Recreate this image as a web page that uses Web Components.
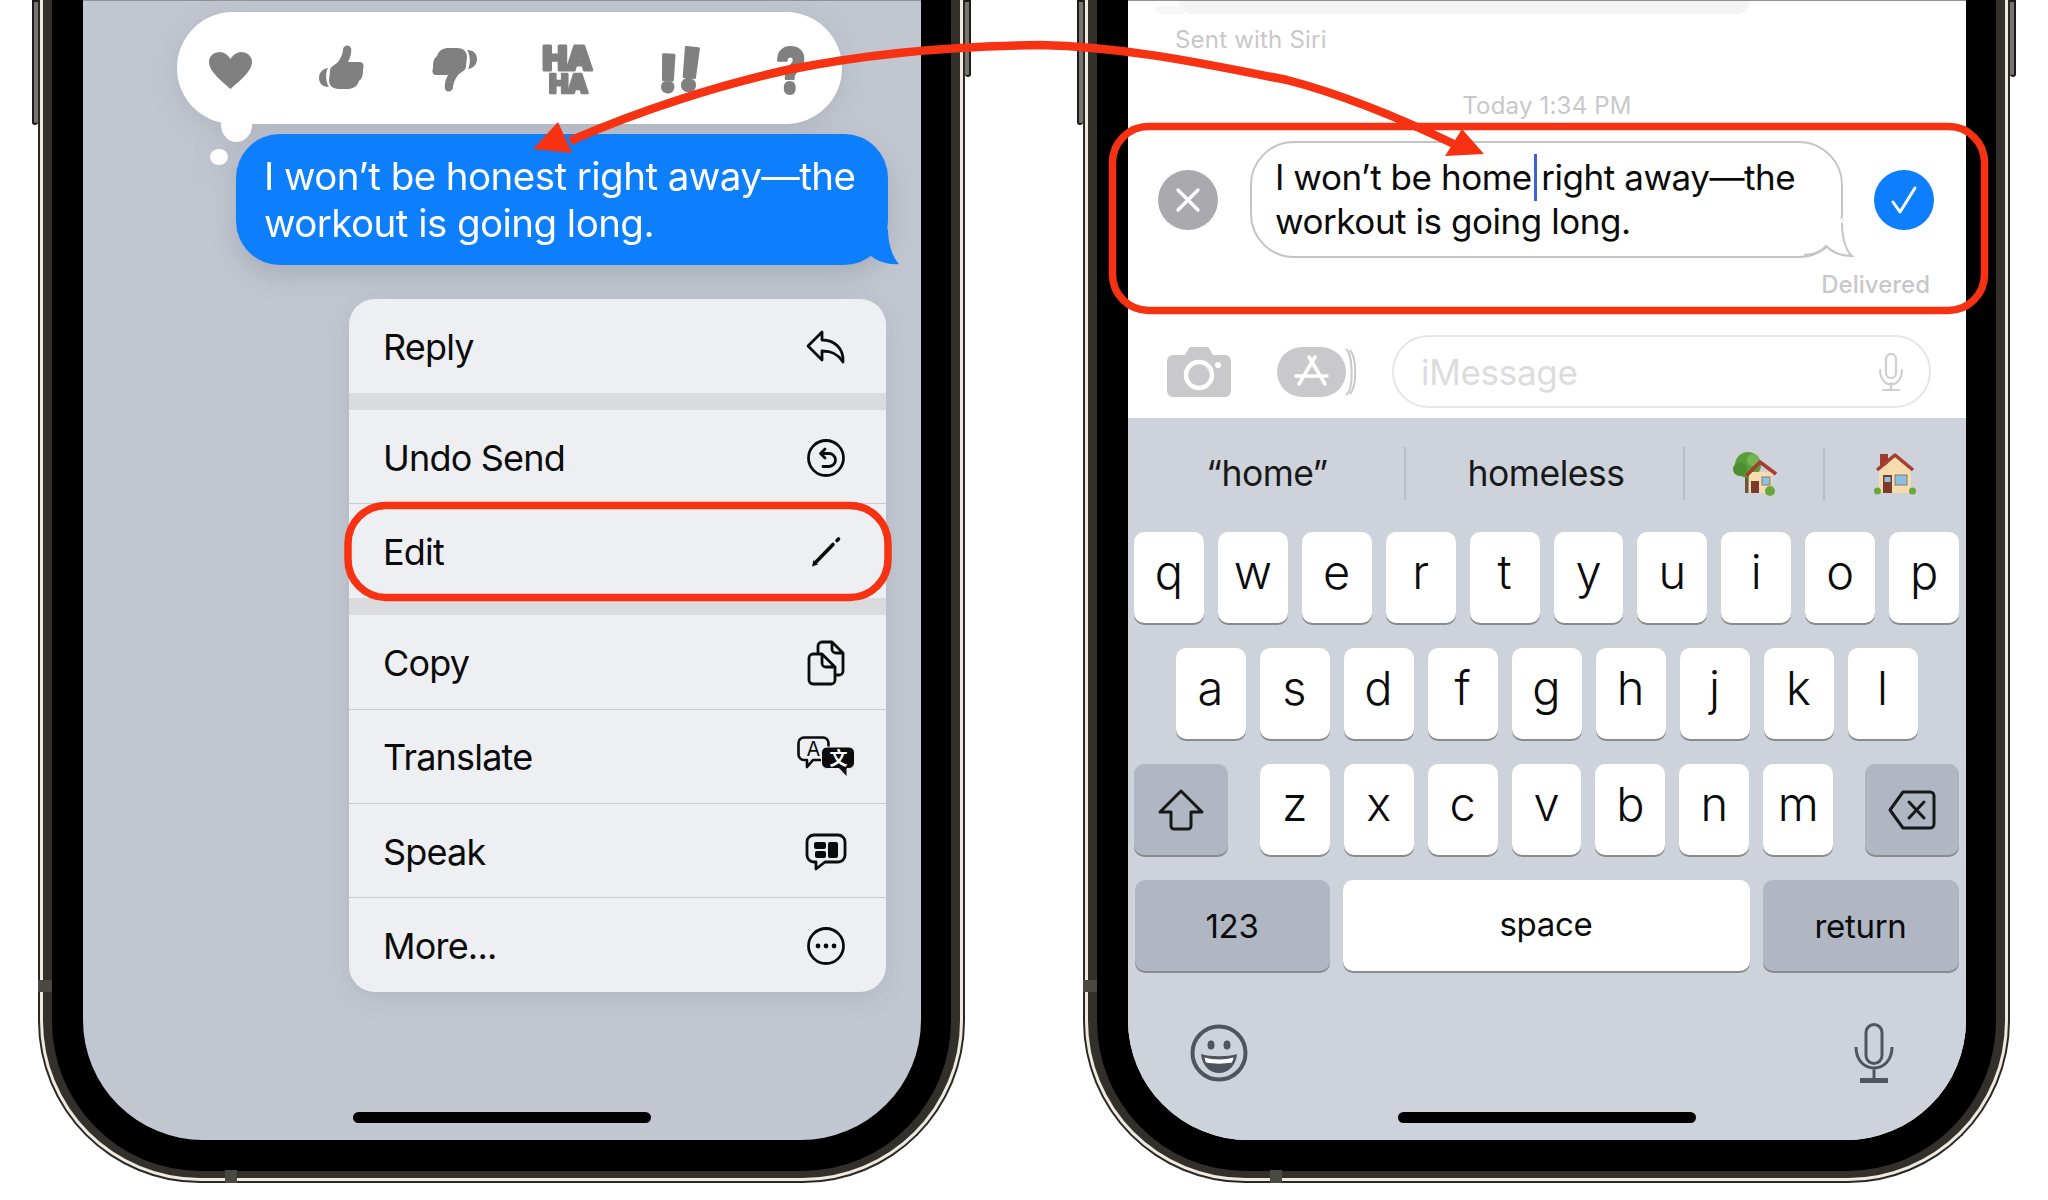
<!DOCTYPE html>
<html>
<head>
<meta charset="utf-8">
<style>
html, body { margin: 0; background: #fff; }
body { width: 2048px; height: 1200px; overflow: hidden; font-family: Inter, "Noto Sans", sans-serif; }
.stage { position: relative; display: flex; gap: 118px; padding-left: 38px; height: 1200px; }
svg { display: block; }
</style>
</head>
<body>
<div class="stage">
	<phone-frame bg="#c1c6d0">
		<tap-back></tap-back>
		<msg-bubble>I won’t be honest right away—the workout is going long.</msg-bubble>
		<action-menu>
			<menu-row label="Reply" gap><svg width="40" height="34" viewBox="0 0 40 34" fill="none" stroke="#0b0b0c" stroke-width="2.8" stroke-linejoin="round"><path d="M2 16 16 2V10C28 10 38 18 37 32 32 24 26 21 16 21V30Z"/></svg></menu-row>
			<menu-row label="Undo Send" line><svg width="40" height="40" viewBox="0 0 40 40" fill="none" stroke="#0b0b0c" stroke-width="2.8" stroke-linecap="round" stroke-linejoin="round"><circle cx="20" cy="20" r="17.5"/><path d="M15 15.5H23A6.5 6.5 0 0 1 23 28.5H17M19 11 14.5 15.5 19 20"/></svg></menu-row>
			<menu-row label="Edit" gap><svg width="32" height="32" viewBox="0 0 32 32" fill="none" stroke="#0b0b0c" stroke-width="3.6" stroke-linecap="round"><path d="M6 26 23 8.5M27 4.5 28.5 3"/><path d="M2 30.5 3.5 24 8 28.5Z" fill="#0b0b0c" stroke="none"/></svg></menu-row>
			<menu-row label="Copy" line><svg width="38" height="46" viewBox="0 0 38 46" fill="none" stroke="#0b0b0c" stroke-width="2.8" stroke-linejoin="round"><path d="M11 14V6A4 4 0 0 1 15 2H25L36 13V31A4 4 0 0 1 32 35H28M25 2V9A4 4 0 0 0 29 13H36"/><path d="M6 14H15L28 27V40A4 4 0 0 1 24 44H6A4 4 0 0 1 2 40V18A4 4 0 0 1 6 14ZM15 14V23A4 4 0 0 0 19 27H28"/></svg></menu-row>
			<menu-row label="Translate" line><svg width="58" height="42" viewBox="0 0 58 42" fill="none"><path d="M7 1.5H26A5.5 5.5 0 0 1 31.5 7V24H16L10 31V24H7A5.5 5.5 0 0 1 1.5 18.5V7A5.5 5.5 0 0 1 7 1.5Z" stroke="#0b0b0c" stroke-width="2.6" stroke-linejoin="round"/><text x="16" y="20" text-anchor="middle" font-family="Inter, sans-serif" font-size="20" fill="#0b0b0c">A</text><path d="M30 11H52A5.5 5.5 0 0 1 57.5 16.5V27A5.5 5.5 0 0 1 52 32.5H50V41L42 32.5H30A5.5 5.5 0 0 1 24.5 27V16.5A5.5 5.5 0 0 1 30 11Z" fill="#0b0b0c" stroke="#eeeff2" stroke-width="1"/><text x="41" y="28.5" text-anchor="middle" font-family="'Noto Sans CJK SC', sans-serif" font-weight="700" font-size="18" fill="#fff">文</text></svg></menu-row>
			<menu-row label="Speak" line><svg width="42" height="38" viewBox="0 0 42 38" fill="none"><path d="M9 2H33A7 7 0 0 1 40 9V22A7 7 0 0 1 33 29H20L11 36V29H9A7 7 0 0 1 2 22V9A7 7 0 0 1 9 2Z" stroke="#0b0b0c" stroke-width="2.8" stroke-linejoin="round"/><rect x="9" y="9" width="12" height="7" rx="2" fill="#0b0b0c"/><rect x="10" y="18" width="11" height="7" rx="2" fill="#0b0b0c"/><rect x="23" y="9" width="10" height="16" rx="2" fill="#0b0b0c"/></svg></menu-row>
			<menu-row label="More..."><svg width="40" height="40" viewBox="0 0 40 40" fill="none"><circle cx="20" cy="20" r="17.5" stroke="#0b0b0c" stroke-width="2.8"/><circle cx="12" cy="20" r="2.4" fill="#0b0b0c"/><circle cx="20" cy="20" r="2.4" fill="#0b0b0c"/><circle cx="28" cy="20" r="2.4" fill="#0b0b0c"/></svg></menu-row>
		</action-menu>
	</phone-frame>
	<phone-frame bg="#fff">
		<thread-head></thread-head>
		<edit-row>I won’t be home right away—the workout is going long.</edit-row>
		<input-bar></input-bar>
		<ios-keyboard></ios-keyboard>
	</phone-frame>
	<call-outs></call-outs>
</div>

<script>
class PhoneFrame extends HTMLElement {
	constructor() {
		super();
		this.attachShadow({ mode: "open" });
		this.shadowRoot.innerHTML = `
			<style>
				:host { display: block; position: relative; width: 927px; height: 1183px; flex: none; }
				.rim { box-sizing: border-box; height: 100%; border: 2px solid #2b2926; border-top: 0; border-radius: 0 0 162px 162px; background: #efe9df; padding: 0 3px 3px; }
				.band { box-sizing: border-box; height: 100%; border: solid #33302c; border-width: 0 9px 7px; border-radius: 0 0 157px 157px; background: #000; padding: 0 30px 31px 31px; }
				.screen { display: flex; flex-direction: column; height: 100%; overflow: hidden; border-radius: 0 0 120px 120px; position: relative; border-top: 1px solid #8f9299; box-sizing: border-box; }
				.home { flex: none; width: 298px; height: 11px; border-radius: 6px; background: #000; margin: auto auto 17px; }
				.btn { position: absolute; top: 0; width: 6px; box-sizing: border-box; background: #77756f; border: 2px solid #1c1b18; border-radius: 0 0 3px 3px; }
				.btn.l { left: -6px; height: 125px; border-right: 0; }
				.btn.r { right: -6px; height: 77px; border-left: 0; }
				.tick { position: absolute; background: #4a4843; }
				.tick.side { left: 0; top: 980px; width: 14px; height: 12px; }
				.tick.bottom { left: 187px; bottom: 0; width: 12px; height: 13px; }
				::slotted(ios-keyboard) { flex: 1; }
			</style>
			<div class="btn l"></div><div class="btn r"></div>
			<div class="rim"><div class="band"><div class="screen">
				<slot></slot>
				<div class="home" id="home"></div>
			</div></div></div>
			<div class="tick side"></div><div class="tick bottom"></div>
		`;
	}
	connectedCallback() {
		const bg = this.getAttribute("bg");
		this.shadowRoot.querySelector(".screen").style.background = bg;
		const home = this.shadowRoot.getElementById("home");
		// on the keyboard screen the bar sits on top of the keyboard
		if (this.querySelector("ios-keyboard")) {
			home.style.cssText = "position:absolute;left:270px;bottom:17px;margin:0";
		}
	}
}
customElements.define("phone-frame", PhoneFrame);

class TapBack extends HTMLElement {
	constructor() {
		super();
		this.attachShadow({ mode: "open" });
		const thumb = `<path d="M9 23C3 24 0 28 0 33 0 38 3 42 10 42 7 38 6 28 9 23Z"/><path d="M11 26C11 22 14 21 18 18 21 15 24 9 24 4 25 0 30-1 32 3 33 8 31 13 29 17H41C45 17 45 22 44 24 44 28 44 33 40 36 38 41 36 43 30 44H20C13 44 10 40 10 35Z"/>`;
		this.shadowRoot.innerHTML = `
			<style>
				:host { display: block; position: relative; box-sizing: border-box; width: 665px; height: 112px; margin: 11px 0 0 94px; background: #fff; border-radius: 56px; filter: drop-shadow(0 6px 14px rgba(60,65,80,.12)); }
				.row { height: 100%; position: relative; }
				.row > * { position: absolute; }
				.puff { position: absolute; background: #fff; border-radius: 50%; }
				text { font-family: Inter, sans-serif; font-weight: 900; fill: #808080; stroke: #808080; stroke-linejoin: round; }
			</style>
			<div class="row">
				<svg style="left:32px;top:40px" width="43" height="37" viewBox="0 0 43 37" fill="#808080"><path d="M21.5 37C14 30 0 20 0 10 0 4 5 0 11 0 15 0 19 3 21.5 7 24 3 28 0 32 0 38 0 43 4 43 10 43 20 29 30 21.5 37Z"/></svg>
				<svg style="left:142px;top:33px" width="45" height="44" viewBox="0 0 45 44" fill="#808080">${thumb}</svg>
				<svg style="left:255px;top:36px;transform:rotate(180deg)" width="45" height="44" viewBox="0 0 45 44" fill="#808080">${thumb}</svg>
				<svg style="left:0;top:0" width="665" height="112" viewBox="0 0 665 112">
					<text x="390" y="58" text-anchor="middle" font-size="33" stroke-width="3" letter-spacing="-1">HA</text>
					<text x="391" y="81" text-anchor="middle" font-size="26" stroke-width="2.5" letter-spacing="-1">HA</text>
					<text x="481" y="79" font-size="50" stroke-width="3" rotate="2"><tspan>!</tspan><tspan font-size="58" dy="-2" rotate="6">!</tspan></text>
					<text transform="translate(614 81) scale(.8 1)" text-anchor="middle" font-size="62" stroke-width="2">?</text>
				</svg>
			</div>
			<div class="puff" style="left:44px;top:96px;width:31px;height:34px"></div>
			<div class="puff" style="left:33px;top:137px;width:18px;height:16px"></div>
		`;
	}
}
customElements.define("tap-back", TapBack);

class MsgBubble extends HTMLElement {
	constructor() {
		super();
		this.attachShadow({ mode: "open" });
		this.shadowRoot.innerHTML = `
			<style>
				:host { display: block; position: relative; box-sizing: border-box; width: 652px; height: 131px; margin: 10px 0 0 153px; padding: 19px 24px 0 28px; background: #0d7ffc; border-radius: 44px; color: #fff; font-size: 38.5px; line-height: 47px; letter-spacing: -.55px; box-shadow: 0 10px 26px rgba(60,65,80,.18); }
				svg { position: absolute; left: 624px; bottom: 0; }
			</style>
			<slot></slot>
			<svg width="40" height="36" viewBox="0 0 40 36" fill="#0d7ffc"><path d="M28 0C28 15 33 29 39 35 30 36 18 33 11 27L5 0Z"/></svg>
		`;
	}
}
customElements.define("msg-bubble", MsgBubble);

class ActionMenu extends HTMLElement {
	constructor() {
		super();
		this.attachShadow({ mode: "open" });
		this.shadowRoot.innerHTML = `
			<style>
				:host { display: block; width: 537px; margin: 34px 0 0 266px; background: #eeeff2; border-radius: 26px; overflow: hidden; box-shadow: 0 6px 24px rgba(60,65,80,.10); flex: none; }
			</style>
			<slot></slot>
		`;
	}
}
customElements.define("action-menu", ActionMenu);

class MenuRow extends HTMLElement {
	constructor() {
		super();
		this.attachShadow({ mode: "open" });
		this.shadowRoot.innerHTML = `
			<style>
				:host { display: flex; align-items: center; box-sizing: border-box; height: 94.3px; padding-left: 34px; color: #0b0b0c; font-size: 36px; letter-spacing: -.8px; }
				:host([line]) { border-bottom: 1px solid #c9cacd; }
				:host([gap]) { height: 111px; border-bottom: 17px solid #dadbdf; }
				.label { flex: 1; padding-top: 2px; }
				.icon { width: 100px; height: 60px; margin: 2px 10px 0 0; display: flex; align-items: center; justify-content: center; }
			</style>
			<div class="label"></div>
			<div class="icon"><slot></slot></div>
		`;
	}
	connectedCallback() {
		this.shadowRoot.querySelector(".label").textContent = this.getAttribute("label");
	}
}
customElements.define("menu-row", MenuRow);

class ThreadHead extends HTMLElement {
	constructor() {
		super();
		this.attachShadow({ mode: "open" });
		this.shadowRoot.innerHTML = `
			<style>
				:host { display: block; flex: none; color: #c8c8ca; font-size: 24px; line-height: 30px; letter-spacing: .2px; }
				.old { position: relative; width: 571px; height: 13px; margin-left: 51px; background: #f4f4f5; border-radius: 0 0 16px 16px; }
				.old::before { content: ""; position: absolute; left: -25px; bottom: 0; width: 30px; height: 8px; background: #f7f7f8; border-radius: 0 0 0 10px; }
				.siri { margin: 11px 0 0 47px; }
				.time { margin-top: 36px; text-align: center; }
			</style>
			<div class="old"></div>
			<div class="siri">Sent with Siri</div>
			<div class="time">Today 1:34 PM</div>
		`;
	}
}
customElements.define("thread-head", ThreadHead);

class EditRow extends HTMLElement {
	constructor() {
		super();
		this.attachShadow({ mode: "open" });
		this.shadowRoot.innerHTML = `
			<style>
				:host { display: block; flex: none; margin-top: 20px; }
				.row { display: flex; align-items: center; gap: 32px; padding-left: 30px; }
				.round { flex: none; width: 60px; height: 60px; border-radius: 50%; display: flex; align-items: center; justify-content: center; }
				.field { position: relative; box-sizing: border-box; width: 593px; height: 117px; padding: 13px 20px 0 23px; border: 2px solid #c4c4c6; border-radius: 44px; background: #fff; color: #0b0b0c; font-size: 35px; line-height: 43.5px; letter-spacing: -.45px; }
				.field svg { position: absolute; right: -14px; bottom: -4px; }
				.caret { position: absolute; left: 282px; top: 11px; width: 3px; height: 47px; background: #3a63d8; }
				.note { margin: 12px 36px 0 0; text-align: right; color: #c8c8ca; font-size: 24px; line-height: 30px; font-weight: 500; }
			</style>
			<div class="row">
				<div class="round" style="background:#a9a9ae"><svg width="26" height="26" viewBox="0 0 26 26" stroke="#fff" stroke-width="3.4" stroke-linecap="round"><path d="M3 3 23 23M23 3 3 23"/></svg></div>
				<div class="field">
					<slot></slot>
					<div class="caret"></div>
					<svg width="56" height="42" viewBox="0 0 56 42"><path d="M43 0V5C43 20 47 33 53 38 42 38 33 34 27 28 22 34 16 37 5 37Z" fill="#fff"/><path d="M43 5C43 20 47 33 53 38 42 38 33 34 27 28 22 34 16 37 5 37" fill="none" stroke="#c4c4c6" stroke-width="2"/></svg>
				</div>
				<div class="round" style="background:#0d7ffc;margin-left:-1px"><svg width="30" height="30" viewBox="0 0 30 30" fill="none" stroke="#fff" stroke-width="3" stroke-linecap="round" stroke-linejoin="round"><path d="M4 17 11 27 26 3"/></svg></div>
			</div>
			<div class="note">Delivered</div>
		`;
	}
}
customElements.define("edit-row", EditRow);

class InputBar extends HTMLElement {
	constructor() {
		super();
		this.attachShadow({ mode: "open" });
		this.shadowRoot.innerHTML = `
			<style>
				:host { display: flex; flex: none; align-items: center; height: 73px; margin-top: 35px; padding-left: 39px; }
				.camera { margin-right: 46px; }
				.apps { margin-right: 35px; }
				.input { box-sizing: border-box; flex: none; display: flex; align-items: center; justify-content: space-between; width: 539px; height: 73px; padding: 0 26px 0 27px; border: 2px solid #e6e6e8; border-radius: 37px; color: #dcdcde; font-size: 35px; letter-spacing: -.3px; }
			</style>
			<svg class="camera" width="64" height="50" viewBox="0 0 64 50"><path d="M6 8H18L22 1A2 2 0 0 1 24 0H40A2 2 0 0 1 42 1L46 8H58A6 6 0 0 1 64 14V44A6 6 0 0 1 58 50H6A6 6 0 0 1 0 44V14A6 6 0 0 1 6 8Z" fill="#c9c9cb"/><circle cx="32" cy="28" r="13" fill="none" stroke="#fff" stroke-width="4.5"/><circle cx="51" cy="18" r="3" fill="#fff"/></svg>
			<svg class="apps" width="80" height="52" viewBox="0 0 80 52" fill="none"><path d="M69 3C76 8 77 44 69 49M73 4C80 12 80 40 73 48" stroke="#c9c9cb" stroke-width="2"/><rect x="0" y="1" width="69" height="50" rx="25" fill="#c9c9cb"/><path d="M32 11 48 38M38 11 22 38M19 30H50" stroke="#fff" stroke-width="3.5" stroke-linecap="round"/></svg>
			<div class="input">iMessage
				<svg width="24" height="38" viewBox="0 0 24 38" fill="none" stroke="#cfcfd1" stroke-width="2.2" stroke-linecap="round"><rect x="7" y="1" width="10" height="24" rx="5"/><path d="M1 17C1 36 23 36 23 17M12 30V37M4 37H20"/></svg>
			</div>
		`;
	}
}
customElements.define("input-bar", InputBar);

class KbKey extends HTMLElement {
	constructor() {
		super();
		this.attachShadow({ mode: "open" });
		this.shadowRoot.innerHTML = `
			<style>
				:host { display: flex; align-items: center; justify-content: center; box-sizing: border-box; flex: 0 1 70px; height: 91px; padding-bottom: 12px; background: #fff; border-radius: 10px; box-shadow: 0 2px 0 #898b90; color: #0b0b0c; font-size: 47px; font-weight: 300; }
				:host([fn]) { background: #b0b6c2; }
				:host([small]) { font-size: 33px; font-weight: 400; padding-bottom: 0; letter-spacing: -.3px; }
				:host([icon]) { padding-bottom: 0; }
			</style>
			<slot></slot>
		`;
	}
}
customElements.define("kb-key", KbKey);

class IosKeyboard extends HTMLElement {
	constructor() {
		super();
		this.attachShadow({ mode: "open" });
		const keys = s => [...s].map(c => `<kb-key>${c}</kb-key>`).join("");
		this.shadowRoot.innerHTML = `
			<style>
				:host { display: block; margin-top: 10px; background: #ced3db; color: #17181a; }
				.suggest { display: flex; height: 53px; margin: 29px 0 32px; font-size: 35.5px; letter-spacing: -.5px; }
				.suggest > div { display: flex; align-items: center; justify-content: center; box-sizing: border-box; border-right: 2px solid #b9bdc6; }
				.suggest > div:last-child { border: 0; }
				.keys { display: flex; flex-direction: column; gap: 25px; padding: 0 7px 0 6px; }
				.line { display: flex; justify-content: center; gap: 14px; }
				.line.third { justify-content: flex-start; }
				.line.fourth { gap: 13px; }
				.bottom { display: flex; justify-content: space-between; align-items: center; padding: 0 72px 0 62px; margin-top: 52px; }
			</style>
			<div class="suggest">
				<div style="width:278px;padding-left:2px">“home”</div>
				<div style="width:279px;padding-left:3px">homeless</div>
				<div style="width:140px"><svg width="46" height="44" viewBox="0 0 46 44">
					<rect x="14" y="24" width="3.5" height="17" fill="#6d5238"/><circle cx="17" cy="13" r="13" fill="#5a9e3c"/><circle cx="9" cy="17" r="7" fill="#4c8f31"/><circle cx="22" cy="8" r="6" fill="#75b552"/>
					<rect x="18" y="20" width="23" height="21" fill="#f5dcae"/><path d="M15 24 29 10 45 22" fill="none" stroke="#a83c2d" stroke-width="3.5" stroke-linejoin="round"/>
					<rect x="20" y="29" width="8" height="12" fill="#7c3b2a"/><rect x="31" y="25" width="8" height="8" fill="#8cc0e0" stroke="#8a7a68"/><circle cx="39" cy="39" r="5" fill="#6aa83e"/>
				</svg></div>
				<div style="width:140px"><svg width="42" height="44" viewBox="0 0 42 44">
					<rect x="6" y="2" width="8" height="12" fill="#9c3a2e"/><path d="M21 5 37 19V41H5V19Z" fill="#f5dcae"/><path d="M3 18 21 3 39 18" fill="none" stroke="#a83c2d" stroke-width="3.5" stroke-linejoin="round"/>
					<rect x="9" y="23" width="9" height="18" fill="#7c3b2a"/><rect x="10.5" y="25" width="6" height="5" fill="#8cc0e0"/><rect x="21" y="23" width="12" height="10" fill="#8cc0e0" stroke="#8a7a68"/>
					<circle cx="3.5" cy="39" r="3.5" fill="#6aa83e"/><circle cx="38.5" cy="39" r="3.5" fill="#6aa83e"/>
				</svg></div>
			</div>
			<div class="keys">
				<div class="line">${keys("qwertyuiop")}</div>
				<div class="line">${keys("asdfghjkl")}</div>
				<div class="line third">
					<kb-key fn icon style="flex-basis:94px;margin-right:18px"><svg width="46" height="42" viewBox="0 0 46 42" fill="none" stroke="#17181a" stroke-width="3" stroke-linejoin="round"><path d="M23 2 44 23H33V37A3 3 0 0 1 30 40H16A3 3 0 0 1 13 37V23H2Z"/></svg></kb-key>
					${keys("zxcvbnm")}
					<kb-key fn icon style="flex-basis:94px;margin-left:18px"><svg width="48" height="40" viewBox="0 0 48 40" fill="none" stroke="#17181a" stroke-width="3" stroke-linecap="round" stroke-linejoin="round"><path d="M15 2H42A4 4 0 0 1 46 6V34A4 4 0 0 1 42 38H15L2 20Z"/><path d="M21 12 36 28M36 12 21 28"/></svg></kb-key>
				</div>
				<div class="line fourth">
					<kb-key fn small style="flex-basis:195px">123</kb-key>
					<kb-key small style="flex-basis:407px;padding-bottom:4px">space</kb-key>
					<kb-key fn small style="flex-basis:196px">return</kb-key>
				</div>
			</div>
			<div class="bottom">
				<svg width="58" height="58" viewBox="0 0 58 58"><circle cx="29" cy="29" r="26.5" fill="none" stroke="#50545f" stroke-width="4"/><ellipse cx="21" cy="21" rx="3.5" ry="4.5" fill="#50545f"/><ellipse cx="37" cy="21" rx="3.5" ry="4.5" fill="#50545f"/><path d="M11 30C20 33 38 33 47 30 46 42 38 49 29 49 20 49 12 42 11 30Z" fill="#50545f"/><path d="M14.5 33.5C22 36 36 36 43.5 33.5 43 35.5 42.7 37 42 38.5 34 40 24 40 16 38.5 15.3 37 15 35.5 14.5 33.5Z" fill="#fff"/></svg>
				<svg width="40" height="60" viewBox="0 0 40 60" fill="none" stroke="#50545f" stroke-width="3"><rect x="12" y="1.5" width="16" height="39" rx="8"/><path d="M2 24C2 52 38 52 38 24M20 46V56"/><path d="M6 57.5H34" stroke-width="5"/></svg>
			</div>
		`;
	}
}
customElements.define("ios-keyboard", IosKeyboard);

class CallOuts extends HTMLElement {
	constructor() {
		super();
		this.attachShadow({ mode: "open" });
		this.shadowRoot.innerHTML = `
			<style>
				:host { position: absolute; left: 0; top: 0; width: 2048px; height: 1200px; pointer-events: none; }
			</style>
			<svg width="2048" height="1200" viewBox="0 0 2048 1200" fill="none" stroke="#f63213">
				<rect x="348" y="505.5" width="540" height="92" rx="38" stroke-width="7.5"/>
				<rect x="1112.5" y="126.5" width="872" height="184" rx="36" stroke-width="7.5"/>
				<path d="M570 141C640 110 720 85 787 70 860 55 950 46 1040 45 1130 47 1210 65 1287 80 1345 95 1400 118 1458 146" stroke-width="8.5"/>
				<path d="M558 122 533 149 572 153Z" fill="#f63213" stroke="none"/>
				<path d="M1462 129 1445 156 1484 154Z" fill="#f63213" stroke="none"/>
			</svg>
		`;
	}
}
customElements.define("call-outs", CallOuts);
</script>
</body>
</html>
